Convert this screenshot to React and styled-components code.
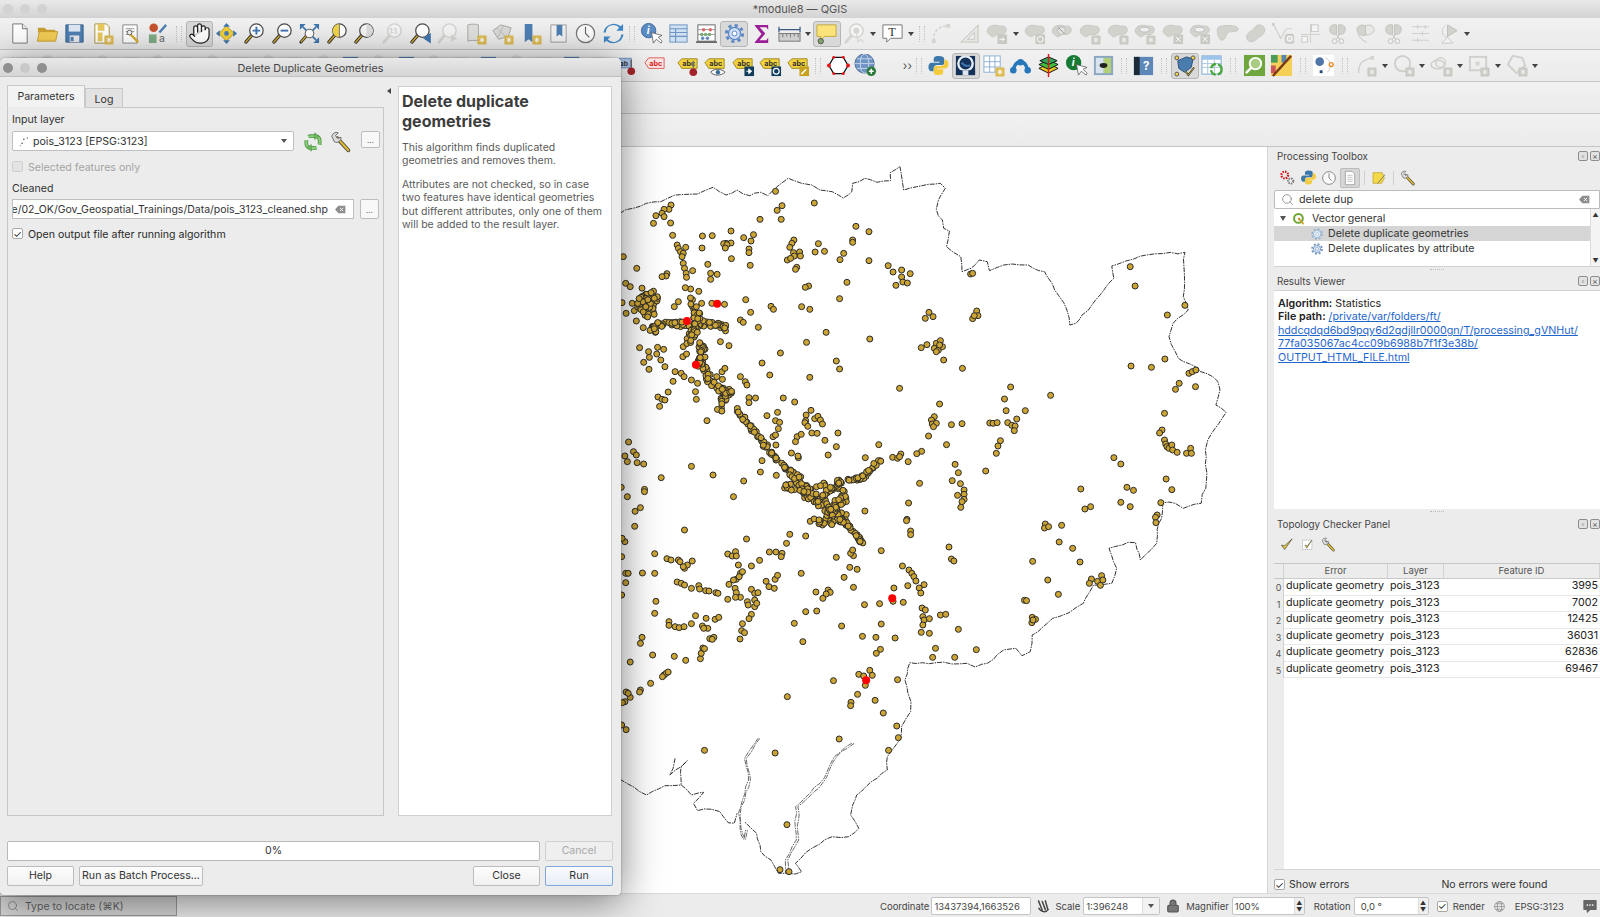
import React from 'react';
import styled, { createGlobalStyle, css } from 'styled-components';
import { Hand, Search, Lock } from 'lucide-react';

const font = `Inter, "Liberation Sans", sans-serif`;

const Global = createGlobalStyle`
  html, body { margin: 0; padding: 0; background: #ececec; }
  * { box-sizing: border-box; }
`;

const Page = styled.div`
  position: relative;
  width: 1600px;
  height: 917px;
  overflow: hidden;
  display: flex;
  flex-direction: column;
  font-family: ${font};
  font-size: 10.6px;
  color: #2a2a2a;
  background: #ececec;
`;

const TitleBar = styled.div`
  height: 18px;
  flex: none;
  position: relative;
  display: flex;
  align-items: center;
  justify-content: center;
  background: linear-gradient(#e9e9e9, #d3d3d3);
  font-size: 11px;
  color: #555;
`;

const Lights = styled.div`
  position: absolute;
  left: 3px;
  top: ${p => p.$top}px;
  display: flex;
  gap: 7px;
`;

const Light = styled.span`
  width: 10px;
  height: 10px;
  border-radius: 50%;
  background: ${p => p.$c};
`;

const ToolRow = styled.div`
  height: ${p => p.$h || 32}px;
  flex: none;
  display: flex;
  align-items: center;
  padding-left: ${p => p.$pad || 0}px;
  background: linear-gradient(#f1f1f1, #ebebeb);
  border-bottom: 1px solid #c6c6c6;
`;

const Tool = styled.div`
  width: 27.6px;
  height: 26px;
  flex: none;
  display: flex;
  align-items: center;
  justify-content: center;
  border-radius: 3px;
  border: 1px solid transparent;
  ${p => p.$on && css`
    background: #d9d9d9;
    border-color: #b6b6b6;
  `}
`;

const Grip = styled.div`
  width: ${p => p.$w}px;
  flex: none;
  display: flex;
  justify-content: center;
  &::after {
    content: '';
    width: 4px;
    height: 16px;
    border-left: 1px dotted #c2c2c2;
    border-right: 1px dotted #c2c2c2;
  }
`;

const Gap = styled.div`
  width: ${p => p.$w}px;
  flex: none;
`;

const VSpace = styled.div`
  height: ${p => p.$h}px;
  flex: none;
`;

const Caret = styled.div`
  width: 10px;
  flex: none;
  display: flex;
  justify-content: center;
  &::after {
    content: '';
    border-left: 3.5px solid transparent;
    border-right: 3.5px solid transparent;
    border-top: 4px solid #444;
  }
`;

const Chevrons = styled.div`
  width: 14px;
  flex: none;
  color: #555;
  font-size: 12px;
  text-align: center;
`;

const Main = styled.div`
  flex: 1;
  min-height: 0;
  display: flex;
`;

const MapCanvas = styled.div`
  width: 1268px;
  flex: none;
  background: #fff;
  border-right: 1px solid #d4d4d4;
`;

const MapSvg = styled.svg`
  display: block;
  width: 1268px;
  height: 746px;
`;

const Dock = styled.div`
  flex: 1;
  min-width: 0;
  display: flex;
  flex-direction: column;
  padding-left: 6px;
  background: #ececec;
`;

const DockTitle = styled.div`
  height: ${p => p.$h}px;
  flex: none;
  display: flex;
  align-items: center;
  justify-content: space-between;
  padding: ${p => p.$top || 0}px 0 0 3px;
  font-size: 9.8px;
  color: #444;
`;

const DockButtons = styled.div`
  display: flex;
  gap: 2px;
`;

const DockButton = styled.span`
  width: 10px;
  height: 10px;
  border: 1px solid #8d8d8d;
  border-radius: 2px;
  font-size: 8px;
  line-height: 8px;
  text-align: center;
  color: #555;
  background: #e2e2e2;
`;

const DockTools = styled.div`
  height: ${p => p.$h}px;
  flex: none;
  display: flex;
  align-items: center;
  gap: ${p => p.$gap || 0}px;
  padding-left: ${p => p.$pad || 0}px;
`;

const SmallTool = styled.div`
  width: 20px;
  height: 20px;
  flex: none;
  display: flex;
  align-items: center;
  justify-content: center;
  border-radius: 2px;
  margin: ${p => p.$mt || 0}px 0 0 ${p => p.$ml || 0}px;
  ${p => p.$on && css`
    background: #d6d6d6;
    border: 1px solid #bdbdbd;
  `}
`;

const Divider = styled.div`
  width: 1px;
  height: 14px;
  flex: none;
  margin: 0 3px;
  background: #d0d0d0;
`;

const SearchBox = styled.div`
  height: 19px;
  flex: none;
  display: flex;
  align-items: center;
  gap: 5px;
  padding: 0 8px 0 6px;
  background: #fff;
  border: 1px solid #bcbcbc;
  border-radius: 2px 0 0 2px;
  font-size: 10.8px;
  color: #333;
`;

const SearchClear = styled.span`
  margin-left: auto;
  display: flex;
`;

const Tree = styled.div`
  height: 58px;
  flex: none;
  position: relative;
  background: #fff;
  border-bottom: 1px solid #d0d0d0;
  padding-top: 2px;
`;

const TreeRow = styled.div`
  height: 15px;
  display: flex;
  align-items: center;
  gap: ${p => (p.$top ? 6 : 4)}px;
  padding-left: ${p => p.$indent}px;
  margin-right: 10px;
  font-size: 10.6px;
  color: #333;
  background: ${p => (p.$sel ? '#d5d5d5' : 'transparent')};
`;

const Twist = styled.span`
  border-left: 3.5px solid transparent;
  border-right: 3.5px solid transparent;
  border-top: 5px solid #555;
`;

const ScrollTrack = styled.div`
  position: absolute;
  right: 0;
  top: 0;
  bottom: 0;
  width: 10px;
  background: #f4f4f4;
  border-left: 1px solid #dcdcdc;
  color: #333;
  font-size: 6px;
  line-height: 11px;
  display: flex;
  flex-direction: column;
  justify-content: space-between;
  align-items: center;
`;

const Splitter = styled.div`
  height: ${p => p.$h}px;
  flex: none;
  display: flex;
  align-items: center;
  justify-content: center;
  &::after {
    content: '';
    width: 14px;
    border-top: 1px dotted #bdbdbd;
  }
`;

const Results = styled.div`
  height: 219px;
  flex: none;
  background: #fff;
  padding: 6px 4px;
  font-size: 10.7px;
  line-height: 13.4px;
  color: #222;
  border-top: 1px solid #d2d2d2;
`;

const Strong = styled.b`
  font-weight: 600;
`;

const ResultLink = styled.span`
  display: ${p => (p.$inline ? 'inline' : 'block')};
  color: #1f66cc;
  text-decoration: underline;
`;

const Table = styled.div`
  height: 307px;
  flex: none;
  display: flex;
  flex-direction: column;
  background: #fff;
  border-top: 1px solid #c6c6c6;
  border-bottom: 1px solid #d4d4d4;
`;

const TableRow = styled.div`
  display: grid;
  grid-template-columns: 10px 104px 56px 1fr;
  height: ${p => (p.$head ? 15 : 16.5)}px;
  flex: none;
  border-bottom: 1px solid ${p => (p.$head ? '#c9c9c9' : '#e8e8e8')};
`;

const HeadCell = styled.div`
  background: #ececec;
  border-right: 1px solid #d2d2d2;
  font-size: 9.5px;
  line-height: 14px;
  text-align: center;
  color: #555;
`;

const RowIndex = styled.div`
  background: #ececec;
  border-right: 1px solid #cfcfcf;
  border-bottom: 1px solid #cfcfcf;
  font-size: 9px;
  line-height: 18px;
  color: #555;
  text-align: center;
`;

const Cell = styled.div`
  padding: 0 2px;
  font-size: 10.7px;
  line-height: 14px;
  color: #222;
  white-space: nowrap;
  text-align: ${p => (p.$num ? 'right' : 'left')};
`;

const TableFill = styled.div`
  flex: 1;
  border-left: 10px solid #ececec;
`;

const ErrorFooter = styled.div`
  flex: 1;
  display: flex;
  align-items: center;
  padding: 6px 0 0 0;
  font-size: 10.5px;
  color: #333;
`;

const Check = styled.span`
  width: 11px;
  height: 11px;
  flex: none;
  display: inline-flex;
  align-items: center;
  justify-content: center;
  background: ${p => (p.$off ? '#e4e4e4' : '#fff')};
  border: 1px solid ${p => (p.$off ? '#cfcfcf' : '#a8a8a8')};
  border-radius: 2px;
  font-size: 10px;
  line-height: 1;
  color: #222;
`;

const CheckLabel = styled.span`
  margin-left: ${p => p.$ml || 5}px;
  color: ${p => (p.$off ? '#a4a4a4' : 'inherit')};
`;

const FoundText = styled.span`
  margin-left: 92px;
`;

const StatusBar = styled.div`
  height: 24px;
  flex: none;
  display: flex;
  align-items: center;
  padding: 1px 0 0 880px;
  background: #ececec;
  border-top: 1px solid #dadada;
  font-size: 9.5px;
  color: #444;
`;

const Locator = styled.div`
  position: absolute;
  left: 0;
  bottom: 1px;
  width: 177px;
  height: 20px;
  display: flex;
  align-items: center;
  gap: 6px;
  padding-left: 6px;
  background: #d6d6d6;
  border: 1px solid #9a9a9a;
  font-size: 10.5px;
  color: #666;
`;

const StatusInput = styled.div`
  width: ${p => p.$w}px;
  height: 18px;
  flex: none;
  display: flex;
  align-items: center;
  justify-content: space-between;
  margin: 0 ${p => p.$mr || 0}px 0 ${p => p.$ml || 3}px;
  padding-left: ${p => (p.$pad ? 6 : 2)}px;
  background: #fff;
  border: 1px solid #c4c4c4;
  border-radius: 2px;
  white-space: nowrap;
`;

const Spin = styled.span`
  width: 10px;
  height: 100%;
  display: flex;
  flex-direction: column;
  align-items: center;
  justify-content: center;
  gap: 1px;
  background: #efefef;
  border-left: 1px solid #ddd;
  font-size: 6px;
  line-height: 6px;
  color: #333;
`;

const ComboEnd = styled.span`
  width: 17px;
  height: 100%;
  display: flex;
  align-items: center;
  justify-content: center;
  background: #f2f2f2;
  border-left: 1px solid #ddd;
  &::after {
    content: '';
    border-left: 3px solid transparent;
    border-right: 3px solid transparent;
    border-top: 4px solid #555;
  }
`;

const StatusSlot = styled.div`
  width: ${p => p.$w}px;
  flex: none;
  display: flex;
  align-items: center;
  justify-content: center;
`;

const StatusText = styled.span`
  white-space: nowrap;
`;

const Dialog = styled.div`
  position: absolute;
  left: 0;
  top: 58px;
  width: 621px;
  height: 837px;
  display: flex;
  flex-direction: column;
  background: #ececec;
  border-radius: 5px 5px 4px 4px;
  box-shadow: 0 6px 40px rgba(0, 0, 0, 0.5), 0 0 2px rgba(0, 0, 0, 0.4);
`;

const DialogTitle = styled.div`
  height: 19px;
  flex: none;
  position: relative;
  display: flex;
  align-items: center;
  justify-content: center;
  padding-top: 2px;
  background: linear-gradient(#e8e8e8, #d5d5d5);
  border-bottom: 1px solid #c0c0c0;
  border-radius: 5px 5px 0 0;
  font-size: 10.8px;
  color: #444;
`;

const DialogBody = styled.div`
  height: 739px;
  flex: none;
  display: flex;
  padding: 9px 9px 0 7px;
`;

const LeftPane = styled.div`
  width: 377px;
  flex: none;
  display: flex;
  flex-direction: column;
`;

const Tabs = styled.div`
  height: 22px;
  flex: none;
  display: flex;
  align-items: flex-end;
  position: relative;
  z-index: 1;
  margin-bottom: -1px;
`;

const Tab = styled.div`
  width: ${p => p.$w}px;
  height: ${p => (p.$active ? 23 : 20)}px;
  flex: none;
  text-align: center;
  line-height: ${p => (p.$active ? 22 : 21)}px;
  font-size: 10.6px;
  color: #333;
  background: ${p => (p.$active ? '#f3f3f3' : '#e2e2e2')};
  border: 1px solid #c8c8c8;
  border-bottom: ${p => (p.$active ? '1px solid #ececec' : '1px solid #c8c8c8')};
`;

const ParamPanel = styled.div`
  flex: 1;
  padding: 5px 4px;
  border: 1px solid #c6c6c6;
  background: #ececec;
`;

const FieldLabel = styled.div`
  height: 14px;
  line-height: 14px;
  margin-top: ${p => p.$mt || 0}px;
  color: #333;
`;

const FieldRow = styled.div`
  display: flex;
  align-items: flex-start;
  margin-top: ${p => p.$mt || 0}px;
`;

const Combo = styled.div`
  width: 282px;
  height: 20px;
  flex: none;
  display: flex;
  align-items: center;
  gap: 1px;
  padding: 0 6px 0 5px;
  background: #fff;
  border: 1px solid #bfbfbf;
  border-radius: 2px;
  color: #333;
`;

const ComboCaret = styled.span`
  margin-left: auto;
  border-left: 3px solid transparent;
  border-right: 3px solid transparent;
  border-top: 4px solid #555;
`;

const PathInput = styled.div`
  width: 342px;
  height: 20px;
  flex: none;
  display: flex;
  align-items: center;
  justify-content: flex-end;
  gap: 6px;
  padding: 0 6px 0 0;
  overflow: hidden;
  background: #fff;
  border: 1px solid #bfbfbf;
  font-size: 10.5px;
  color: #333;
  white-space: nowrap;
`;

const Ellipsis = styled.div`
  width: 19px;
  height: ${p => p.$h}px;
  flex: none;
  margin-left: ${p => p.$ml}px;
  background: #f8f8f8;
  border: 1px solid #bdbdbd;
  border-radius: 2px;
  color: #555;
  font-size: 8px;
  line-height: ${p => p.$h}px;
  text-align: center;
`;

const Collapser = styled.div`
  width: 14px;
  flex: none;
  padding: 2px 0 0 3px;
  &::after {
    content: '';
    display: block;
    width: 0;
    border-top: 3px solid transparent;
    border-bottom: 3px solid transparent;
    border-right: 4px solid #444;
  }
`;

const HelpPanel = styled.div`
  flex: 1;
  min-width: 0;
  padding: 4px 3px;
  background: #fff;
  border: 1px solid #d0d0d0;
  color: #5a5a5a;
  font-size: 10.5px;
  line-height: 13.4px;
`;

const HelpHeading = styled.h2`
  margin: 0 0 10px;
  font-size: 16px;
  line-height: 20px;
  font-weight: 700;
  color: #3c3c3c;
`;

const HelpText = styled.p`
  margin: 0 0 10px;
`;

const DialogFooter = styled.div`
  flex: 1;
  display: flex;
  flex-direction: column;
  gap: 5px;
  padding: 25px 9px 0 7px;
`;

const FooterRow = styled.div`
  display: flex;
  gap: 5px;
`;

const Progress = styled.div`
  width: 533px;
  height: 20px;
  flex: none;
  background: #fff;
  border: 1px solid #b8b8b8;
  border-radius: 2px;
  text-align: center;
  line-height: 18px;
  color: #333;
`;

const Button = styled.div`
  width: ${p => p.$w}px;
  height: 20px;
  flex: none;
  margin-left: ${p => p.$ml || 0}px;
  text-align: center;
  line-height: 18px;
  white-space: nowrap;
  color: ${p => (p.$off ? '#a8a8a8' : '#333')};
  background: ${p => (p.$primary ? 'linear-gradient(#fbfcff, #e6edf7)' : p.$off ? '#efefef' : 'linear-gradient(#fdfdfd, #f1f1f1)')};
  border: 1px solid ${p => (p.$primary ? '#7fa8dc' : p.$off ? '#d0d0d0' : '#bcbcbc')};
  border-radius: 2px;
`;

// --- icons ---

const Svg = styled.svg`
  width: ${p => p.$s || 24}px;
  height: ${p => p.$s || 24}px;
  display: block;
  flex: none;
`;

const Ic = ({ s, children }) => <Svg $s={s} viewBox="0 0 24 24" fill="none">{children}</Svg>;

const Badge = ({ c = '#dcb94e' }) => (
  <g>
    <rect x="14" y="14" width="9.5" height="9.5" rx="1" fill={c} />
    <path d="M18.7 15.8v6M16.2 17.2l5 3M21.2 17.2l-5 3" stroke="#fff" strokeWidth="1" />
  </g>
);

const Lens = ({ fill = '#fff', stroke = '#4d4d4d', handle = '#d3ab2b', children }) => (
  <g>
    <path d="M9 14L3 21" stroke="#333" strokeWidth="3.4" strokeLinecap="round" />
    <path d="M9 14L3 21" stroke={handle} strokeWidth="1.6" strokeLinecap="round" />
    <circle cx="14" cy="9" r="7" fill={fill} stroke={stroke} strokeWidth="1.3" />
    {children}
  </g>
);

const GreyLens = ({ children }) => (
  <g>
    <path d="M9 14L3 21" stroke="#d4d4d0" strokeWidth="3" strokeLinecap="round" />
    <circle cx="14" cy="9" r="7" fill="#f4f4f4" stroke="#d0d0cc" strokeWidth="1.4" />
    {children}
  </g>
);

const Blob = ({ d = 'M3 7c2-4 8-4 11-3s7-1 8 3-3 7-7 6-5 4-8 2-6-4-4-8z', children }) => (
  <g>
    <path d={d} fill="#d3d3ce" stroke="#c6c6c2" strokeWidth="1" />
    {children}
  </g>
);

const GreyBadge = () => (
  <g>
    <rect x="14" y="14" width="9.5" height="9.5" rx="1" fill="#c9c9c3" />
    <path d="M18.7 15.8v6M16.2 17.2l5 3M21.2 17.2l-5 3" stroke="#f2f2f2" strokeWidth="1" />
  </g>
);

const Tag = ({ fill = '#f2d13c', line = '#9c8a2b', color = '#333', children }) => (
  <g>
    <path d="M1 9l4-4h16v10H5z" fill={fill} stroke={line} strokeWidth="1" />
    <text x="5.5" y="12.8" fontSize="7.5" fontWeight="700" fontFamily={font} fill={color}>abc</text>
    {children}
  </g>
);

const Cog = ({ c = '#5b87c5', fill = '#cfe0f4' }) => (
  <g>
    <circle cx="12" cy="12" r="8.5" stroke={c} strokeWidth="3" strokeDasharray="3.3 3.37" />
    <circle cx="12" cy="12" r="6.3" fill={fill} stroke={c} strokeWidth="1.3" />
    <circle cx="12" cy="12" r="2.6" fill="#fff" stroke={c} strokeWidth="1" />
  </g>
);

const Python = () => (
  <g>
    <path d="M12 2c-4 0-5 1.500-5 3.500V8h6v1H5c-2.500 0-3.500 2-3.500 4.500S2.500 18 5 18h2v-3c0-2 1.500-3.500 3.500-3.500h5c1.500 0 2.500-1 2.500-2.500V5.500C18 3 16 2 12 2z" fill="#3d78ab" />
    <path d="M12 22c4 0 5-1.500 5-3.500V16h-6v-1h8c2.500 0 3.500-2 3.500-4.500S21.500 6 19 6h-1v3c0 2-1.500 3.500-3.500 3.500h-5C8 12.500 7 13.500 7 15v3.500C7 21 8 22 12 22z" fill="#f3cb3f" />
  </g>
);

const icons = {
  new: <><path d="M5 2h10l5 5v15H5z" fill="#fff" stroke="#777" /><path d="M15 2v5h5" fill="#eee" stroke="#777" /></>,
  open: <><path d="M2 6h7l2 2h9v3H2z" fill="#c9a030" /><path d="M1.500 20l2-10h19l-2 10z" fill="#f4cd55" stroke="#c9a030" /></>,
  save: <><path d="M3 3h18v18H3z" fill="#4e7fb3" stroke="#3a618c" /><rect x="6" y="3" width="12" height="7" fill="#dfe8f2" /><rect x="7" y="14" width="10" height="7" fill="#e8e8e8" /><rect x="8" y="15.500" width="3" height="4.500" fill="#4e7fb3" /></>,
  saveAs: <><path d="M4 2h12l3 3v17H4z" fill="#fff" stroke="#a8923c" /><path d="M7 2h7v7H7zM7 11h5v9H7z" fill="#e9c95b" /><Badge /></>,
  props: <><path d="M4 3h15v19H4z" fill="#fff" stroke="#888" /><path d="M7 7h9M7 10h9M7 13h5" stroke="#999" /><path d="M11 12l9 9" stroke="#d3ab2b" strokeWidth="2.500" /><circle cx="11" cy="11" r="2.500" fill="#eee" stroke="#666" /></>,
  style: <><circle cx="8" cy="6" r="4.500" fill="#c5532e" /><path d="M14 11L21 3" stroke="#4e7fb3" strokeWidth="2.500" /><rect x="3" y="13" width="8" height="9" fill="#7eab84" /><text x="13.500" y="21" fontSize="11" fontFamily={font} fill="#666">a</text></>,
  pan: <><path d="M12 4l8 8-8 8-8-8z" fill="#f1cf3b" stroke="#b99b22" /><circle cx="12" cy="12" r="2.500" fill="#4e7fb3" /><path d="M12 1l3.500 4h-7zM12 23l3.500-4h-7zM1 12l4-3.500v7zM23 12l-4-3.500v7z" fill="#3f76ae" /></>,
  zoomIn: <Lens><path d="M14 5v8M10 9h8" stroke="#3f76ae" strokeWidth="2" /></Lens>,
  zoomOut: <Lens><path d="M10 9h8" stroke="#3f76ae" strokeWidth="2" /></Lens>,
  zoomFull: <><path d="M2 2h6L2 8zM22 2h-6l6 6zM22 22h-6l6-6z" fill="#3f76ae" /><path d="M5 5l5 5M19 5l-5 5M19 19l-5-5" stroke="#3f76ae" strokeWidth="1.800" /><path d="M9 14L3 21" stroke="#333" strokeWidth="3.200" strokeLinecap="round" /><path d="M9 14L3 21" stroke="#d3ab2b" strokeWidth="1.500" /><circle cx="12" cy="12" r="4.500" fill="#fff" stroke="#555" /></>,
  zoomSel: <Lens><path d="M14 2a7 7 0 0 0 0 14z" fill="#f1d448" /><path d="M14 2v14" stroke="#777" /></Lens>,
  zoomLayer: <Lens fill="#f4f4f4"><path d="M14 2a7 7 0 0 1 0 14z" fill="#dcdcdc" /></Lens>,
  zoomOne: <GreyLens><text x="8.500" y="12" fontSize="7.500" fontFamily={font} fill="#c4c4c0">1:1</text></GreyLens>,
  zoomLast: <Lens><path d="M22 13l-6 4 6 4z" fill="#3f76ae" stroke="#3f76ae" strokeWidth="1.500" /></Lens>,
  zoomNext: <GreyLens><path d="M16 13l6 4-6 4z" fill="#d6d6d2" /></GreyLens>,
  mapNew: <><path d="M4 3c2-1 9-1 11 0v17c-2-1-9-1-11 0z" fill="#e0e0de" stroke="#a9a9a5" /><Badge /></>,
  mapTile: <><path d="M2 9l8-6 11 3-3 9-10 3z" fill="#dadad6" stroke="#a6a6a2" /><path d="M6 6l9 9M13 4l-6 12" stroke="#bbb" /><Badge /></>,
  bookNew: <><path d="M6 2h8v19l-4-3-4 3z" fill="#4e7fb3" /><Badge /></>,
  book: <><path d="M4 3h16v18H4z" fill="#f2f2f2" stroke="#9c9c9c" /><path d="M10 3h6v12l-3-2-3 2z" fill="#4e7fb3" /></>,
  clock: <><circle cx="12" cy="12" r="9.500" fill="#fbfbfb" stroke="#777" strokeWidth="1.300" /><path d="M12 5v7l4 4" stroke="#666" strokeWidth="1.200" /></>,
  refresh: <><path d="M4 11a8 8 0 0 1 14-5l-3 3h7V2l-2.500 2.500A11 11 0 0 0 1.500 11z" fill="#3f87c6" /><path d="M20 13a8 8 0 0 1-14 5l3-3H2v7l2.500-2.500A11 11 0 0 0 22.500 13z" fill="#3f87c6" /></>,
  identify: <><circle cx="9" cy="9" r="7.500" fill="#5b8cc4" stroke="#41699a" /><text x="7" y="13" fontSize="11" fontWeight="700" fontStyle="italic" fontFamily={font} fill="#fff">i</text><path d="M12 11l2 11 3-4 5 4 1-2-4-4 4-2z" fill="#fff" stroke="#555" strokeWidth=".8" /></>,
  attr: <><rect x="3" y="3" width="18" height="18" fill="#cfe0f2" stroke="#6e95bf" /><path d="M3 7h18M3 11h18M3 15h18M9 7v14" stroke="#6e95bf" strokeWidth="1.200" /></>,
  abacus: <><rect x="3" y="3" width="18" height="17" fill="#fff" stroke="#666" /><path d="M3 8h18M3 13h18" stroke="#999" /><circle cx="9" cy="8" r="1.800" fill="#d66" /><circle cx="16" cy="8" r="1.800" fill="#d66" /><circle cx="7" cy="13" r="1.800" fill="#7a7" /><circle cx="11" cy="13" r="1.800" fill="#7a7" /><circle cx="15" cy="13" r="1.800" fill="#7a7" /><circle cx="8" cy="17" r="1.800" fill="#68b" /><circle cx="13" cy="17" r="1.800" fill="#68b" /><path d="M1 21h22" stroke="#555" strokeWidth="1.500" /></>,
  gear: <Cog />,
  sigma: <path d="M5 3h14v5l-2-2.500H10l6 6.500-6 7h7l2-2.500V22H5v-1l7-8.500L5 4z" fill="#9b1e99" />,
  ruler: <><path d="M1 8h22M1 5v6M23 5v6" stroke="#3b5b82" strokeWidth="1.300" /><rect x="1" y="12" width="22" height="8" fill="#cfcfcf" stroke="#777" /><path d="M5 12v4M9 12v3M13 12v4M17 12v3M21 12v4" stroke="#777" /></>,
  balloon: <><path d="M2 3h20v12H10l-4 4v-4H2z" fill="#fbe27a" stroke="#c2a73a" /><circle cx="6" cy="20" r="2.800" fill="#7ea46a" stroke="#555" /></>,
  mapTip: <GreyLens><circle cx="14" cy="9" r="3" fill="#d5d5d1" /><path d="M14 12l2 9 2-3 4 3" stroke="#cfcfcb" /></GreyLens>,
  text: <><path d="M2 3h20v14H10l-4 4v-4H2z" fill="#fff" stroke="#777" /><text x="7.500" y="14.500" fontSize="13" fontFamily='"Liberation Serif", serif' fill="#333">T</text></>,
  digitize: <><path d="M4 20C3 10 9 4 19 4" stroke="#cfcfcb" strokeWidth="1.500" strokeDasharray="3 2" /><rect x="2" y="18" width="4" height="4" fill="#d4d4d0" /><rect x="17" y="2" width="4" height="4" fill="#d4d4d0" /></>,
  triangle: <><path d="M3 21L21 3v18z" fill="#e4e4e0" stroke="#c4c4c0" /><path d="M10 18l7-7v7z" fill="#f0f0f0" stroke="#c4c4c0" /></>,
  blobArrow: <Blob><rect x="13" y="13" width="10" height="10" fill="#c9c9c3" /><path d="M15 18h5M18 16l2 2-2 2" stroke="#fff" /></Blob>,
  blobRot: <Blob><rect x="13" y="13" width="10" height="10" fill="#c9c9c3" /><circle cx="18" cy="18" r="3" stroke="#fff" /></Blob>,
  blobCut: <Blob><circle cx="12" cy="9" r="4" fill="#e4e4e0" stroke="#bbb" /><path d="M9 6l6 6" stroke="#999" /></Blob>,
  blobStar: <Blob><GreyBadge /></Blob>,
  blobHole: <Blob><ellipse cx="12" cy="8" rx="5" ry="2.500" fill="#f0f0f0" stroke="#bbb" /><GreyBadge /></Blob>,
  blobX: <Blob><rect x="13" y="13" width="10" height="10" fill="#c9c9c3" /><path d="M15.500 15.500l5 5M20.500 15.500l-5 5" stroke="#fff" /></Blob>,
  blobHoleX: <Blob><ellipse cx="12" cy="8" rx="5" ry="2.500" fill="#f0f0f0" stroke="#bbb" /><rect x="13" y="13" width="10" height="10" fill="#c9c9c3" /><path d="M15.500 15.500l5 5M20.500 15.500l-5 5" stroke="#fff" /></Blob>,
  blobPlain: <Blob d="M2 6c3-3 15-3 19-1s2 5-2 5-7 0-8 3-2 6-5 6-6-9-4-13z" />,
  bean: <path d="M3 17c-1-4 2-6 5-8s4-6 8-6 7 4 5 8-5 4-8 7-9 4-10-1z" fill="#d3d3ce" stroke="#c6c6c2" />,
  vertex: <><path d="M3 3l7 14 6-10h6" stroke="#cfcfcb" strokeWidth="1.200" /><rect x="1" y="1" width="3" height="3" fill="#d0d0cc" /><rect x="15" y="13" width="9" height="9" rx="2" fill="#d8d8d4" stroke="#bbb" /><circle cx="19.500" cy="17.500" r="2.500" stroke="#fff" /></>,
  align: <><path d="M12 2v20M2 13h20" stroke="#cfcfcb" /><rect x="13" y="3" width="7" height="7" fill="#f4f4f4" stroke="#c8c8c4" /><rect x="3" y="15" width="6" height="6" fill="#f4f4f4" stroke="#c8c8c4" /></>,
  split: <><path d="M11 3c-5-1-8 2-7 6s4 4 7 4zM13 3c5-1 8 2 7 6s-4 4-7 4z" fill="#d3d3ce" stroke="#c2c2be" /><circle cx="9" cy="20" r="2.500" stroke="#c2c2be" /><circle cx="16" cy="20" r="2.500" stroke="#c2c2be" /><path d="M11 18l3-5M14 18l-3-5" stroke="#c2c2be" /></>,
  merge: <><path d="M3 8c0-4 5-6 9-4v10c-4 1-9-2-9-6z" fill="#d3d3ce" stroke="#c2c2be" /><path d="M12 4c4-2 9 0 9 4s-5 6-9 5z" fill="#e8e8e4" stroke="#c2c2be" /><path d="M4 12c2 5 6 8 9 9" stroke="#c2c2be" /></>,
  offset: <path d="M3 5h18M3 12h18M3 19h18M9 3v4M14 10v4M9 17v4M17 3v4" stroke="#cfcfcb" strokeWidth="1.200" />,
  reshape: <><path d="M11 3v12L21 9z" fill="#d3d3ce" stroke="#bdbdb9" /><path d="M9 3C4 7 4 15 11 16" stroke="#bdbdb9" strokeDasharray="2 1" /><path d="M5 22l6-6 6 6z" stroke="#c8c8c4" fill="#f2f2f2" /></>,
  abPin: <><path d="M1 8l4-3.500h12v10H5z" fill="#a8c2e2" stroke="#6e8fb8" /><text x="5" y="12" fontSize="7" fontWeight="700" fontFamily={font} fill="#333">ab</text><path d="M17 6v8" stroke="#666" strokeWidth="1.500" /><circle cx="17" cy="18" r="4" fill="#a4232b" /></>,
  abcRed: <><path d="M2 9l4-5h16v11H6z" fill="#fde8e8" stroke="#e25b5b" /><text x="6.500" y="12.500" fontSize="7.500" fontWeight="700" fontFamily={font} fill="#d22">abc</text></>,
  labelPin: <Tag><path d="M17 7v8" stroke="#777" strokeWidth="1.500" /><circle cx="17" cy="19" r="4" fill="#a4232b" /></Tag>,
  labelEye: <Tag><path d="M7 19c3-4 11-4 15 0-4 4-12 4-15 0z" fill="#fff" stroke="#555" /><circle cx="14.500" cy="19" r="2.300" fill="#3c6a9a" /></Tag>,
  labelMove: <Tag><rect x="13" y="13" width="10" height="10" fill="#123e5e" /><path d="M15 18h4M17.500 15.500L20.500 18l-3 2.500z" fill="#fff" stroke="#fff" /></Tag>,
  labelRot: <Tag><rect x="13" y="13" width="10" height="10" fill="#123e5e" /><circle cx="18" cy="18" r="3" stroke="#fff" strokeWidth="1.300" /></Tag>,
  labelEdit: <Tag><rect x="13" y="13" width="10" height="10" fill="#c8a21c" /><path d="M15 21l5-5" stroke="#fff" strokeWidth="1.500" /></Tag>,
  hexagon: <><path d="M7 3.500h10L22 12l-5 8.500H7L2 12z" stroke="#111" strokeWidth="1.300" fill="#fff" /><circle cx="7" cy="3.500" r="1.500" fill="#e11" /><circle cx="17" cy="3.500" r="1.500" fill="#e11" /><circle cx="22" cy="12" r="2" fill="#e11" /><circle cx="2" cy="12" r="2" fill="#e11" /><circle cx="7" cy="20.500" r="1.500" fill="#e11" /><circle cx="17" cy="20.500" r="1.500" fill="#e11" /></>,
  globe: <><circle cx="11" cy="10" r="10" fill="#6f94c4" stroke="#506f98" /><ellipse cx="11" cy="10" rx="4.500" ry="10" stroke="#c6d6ea" /><path d="M1 10h20M3 5h16M3 15h16" stroke="#c6d6ea" /><circle cx="18" cy="18" r="5" fill="#2d7a3e" /><path d="M15.500 18h5M18 15.500v5" stroke="#fff" strokeWidth="1.500" /></>,
  python: <Python />,
  plugin: <><rect x="2" y="2" width="20" height="20" fill="#14315a" /><circle cx="12" cy="10" r="7.500" fill="none" stroke="#e6ecf3" strokeWidth="2.500" /><path d="M8 9c2 3 5 4 9 3" stroke="#3f76ae" strokeWidth="2" /><path d="M2 17h20v5H2z" fill="#14315a" /><rect x="9" y="17" width="6" height="5" fill="#dfe6ee" /></>,
  grid: <><rect x="2" y="2" width="17" height="17" fill="#fff" stroke="#8fb0d6" /><path d="M2 8h17M2 13.500h17M8 2v17M13.500 2v17" stroke="#8fb0d6" /><Badge /></>,
  nodes: <><path d="M4.500 16.500C6 11 8 8 12 8s6 3 7.500 8.500" stroke="#2678bb" strokeWidth="3.600" /><circle cx="4.500" cy="17" r="3.400" fill="#2678bb" /><circle cx="12" cy="8.500" r="3.400" fill="#2678bb" /><circle cx="19.500" cy="17" r="3.400" fill="#2678bb" /></>,
  layers: <><path d="M2 15l10-5 10 5-10 5z" fill="#e7c628" stroke="#111" /><path d="M2 11l10-5 10 5-10 5z" fill="#3fbf3a" stroke="#111" /><path d="M3 7l9-4 9 4-9 4z" fill="#2ea65a" stroke="#111" /><path d="M12 0v24" stroke="#e11" strokeWidth="1.500" /></>,
  info: <><circle cx="9" cy="9" r="8" fill="#167a35" /><text x="7" y="13" fontSize="11" fontWeight="700" fontStyle="italic" fontFamily={font} fill="#fff">i</text><path d="M12 11l2 11 3-4 5 4 1-2-4-4 4-2z" fill="#fff" stroke="#555" strokeWidth=".8" /></>,
  swipe: <><rect x="2" y="2" width="20" height="20" fill="#8aa6c0" /><rect x="12" y="4" width="8" height="16" fill="#b3cf7a" /><rect x="4" y="4" width="8" height="16" fill="#d9e4ee" /><ellipse cx="12" cy="12" rx="4" ry="2.500" fill="#222" /></>,
  help: <><rect x="2" y="3" width="20" height="19" fill="#5c87b8" /><rect x="2" y="3" width="6" height="19" fill="#1d2a38" /><text x="11.500" y="17" fontSize="12" fontWeight="700" fontFamily={font} fill="#fff">?</text></>,
  topo: <><path d="M5 7l9-4 7 2-2 9-7 5-6-4z" fill="#4a7cae" stroke="#2e5379" /><circle cx="4" cy="4" r="2" fill="#f1d448" stroke="#555" /><circle cx="21" cy="4" r="2" fill="#f1d448" stroke="#555" /><circle cx="4" cy="21" r="2" fill="#f1d448" stroke="#555" /><path d="M13 18l3 4 6-8" stroke="#222" strokeWidth="1.800" /><path d="M13 18l3 4 6-8" stroke="#e8cc3a" strokeWidth=".8" /></>,
  tableSync: <><rect x="1" y="2" width="20" height="19" fill="#fff" stroke="#7ba7d3" /><rect x="1" y="2" width="20" height="4" fill="#9cc3e8" /><path d="M1 10h20M1 14h20M7 6v15M14 6v15" stroke="#a9c3dd" /><circle cx="16" cy="16" r="5.500" stroke="#4aa83a" strokeWidth="2.500" strokeDasharray="7 2" /></>,
  searchGreen: <><rect x="1" y="1" width="22" height="22" fill="#6fa63e" /><circle cx="13" cy="10" r="6" fill="#a8cc82" stroke="#fff" strokeWidth="2" /><path d="M9 14l-6 6" stroke="#fff" strokeWidth="2.500" /></>,
  paint: <><rect x="1" y="1" width="22" height="22" fill="#f5cf58" /><path d="M1 1h7v8H1z" fill="#4a9b57" /><path d="M1 12h5v8H1z" fill="#c55" /><path d="M12 1h5v8h-5z" fill="#58a" /><path d="M3 23L22 2" stroke="#7a3a15" strokeWidth="2.500" /></>,
  scatter: <><rect x="1" y="1" width="22" height="22" fill="#fff" /><circle cx="8" cy="8" r="4.500" fill="#4f76a6" /><path d="M14 4c5 2 8 9 2 15" stroke="#ccc" /><circle cx="20" cy="11" r="2" fill="#fff" stroke="#e68a2e" strokeWidth="1.500" /><rect x="8" y="17" width="3" height="3" fill="#2a4a75" /></>,
  digLine: <><path d="M5 20C4 10 9 6 19 4" stroke="#cfcfcb" strokeWidth="1.500" /><rect x="17" y="2" width="4" height="4" fill="#d4d4d0" /><GreyBadge /></>,
  digCircle: <><circle cx="11" cy="10" r="8" stroke="#cfcfcb" strokeWidth="2" /><GreyBadge /></>,
  digEllipse: <><ellipse cx="8" cy="11" rx="7" ry="4.500" stroke="#cfcfcb" strokeWidth="1.500" /><circle cx="11" cy="9" r="5" stroke="#cfcfcb" strokeWidth="1.500" /><GreyBadge /></>,
  digRect: <><rect x="3" y="3" width="17" height="14" stroke="#cfcfcb" strokeWidth="2" /><rect x="9" y="8" width="4" height="4" fill="#d4d4d0" /><GreyBadge /></>,
  digPoly: <><path d="M8 2l10 2 3 8-9 8-9-9z" stroke="#cfcfcb" strokeWidth="2" /><GreyBadge /></>,
  faintA: <><rect x="4" y="3" width="16" height="18" fill="#e3e3e0" /><GreyBadge /></>,
  faintB: <><circle cx="12" cy="8" r="7" fill="#dedede" /></>,
  faintC: <><rect x="4" y="3" width="16" height="9" fill="#5c87b8" /></>,
  checkGold: <path d="M4 13l5 7L21 3 9 14z" fill="#e8cc3a" stroke="#333" strokeWidth="1" />,
  checkBox: <><rect x="4" y="5" width="15" height="15" fill="#fff" stroke="#999" strokeDasharray="2 1" /><path d="M8 13l3 5 8-13-7 9z" fill="#e8cc3a" stroke="#444" strokeWidth=".8" /></>,
  wrench: <><path d="M8 8l12 13" stroke="#444" strokeWidth="4.200" strokeLinecap="round" /><path d="M8 8l12 13" stroke="#e0b92e" strokeWidth="2.400" strokeLinecap="round" /><path d="M2 6a5 5 0 0 1 7-4L6 5l2 3 4-1a5 5 0 0 1-7 5z" fill="#dcdcdc" stroke="#555" strokeWidth=".9" /></>,
  syncGreen: <><rect x="4" y="5" width="16" height="14" rx="5" stroke="#4d9443" strokeWidth="4.500" strokeDasharray="19 5 19 5" /><rect x="4" y="5" width="16" height="14" rx="5" stroke="#8ccf7a" strokeWidth="2.500" strokeDasharray="19 5 19 5" /><path d="M14 1l5 4-5 4zM10 15l-5 4 5 4z" fill="#6fb85f" stroke="#4d9443" strokeWidth=".7" /></>,
  gears: <><circle cx="9" cy="8" r="4.500" stroke="#d21616" strokeWidth="3" strokeDasharray="2 1.500" /><circle cx="17" cy="16" r="3.500" stroke="#777" strokeWidth="2.500" strokeDasharray="2 1.300" /></>,
  doc: <><path d="M5 2h10l4 4v16H5z" fill="#fff" stroke="#888" /><path d="M8 8h8M8 11h8M8 14h8M8 17h8" stroke="#aaa" /></>,
  note: <><path d="M3 4h14l3 8-4 8H3z" fill="#f3d949" stroke="#b99b22" /><path d="M10 20L21 7" stroke="#777" strokeWidth="1.400" /></>,
  qgis: <><circle cx="11" cy="11" r="7.500" stroke="#6da636" strokeWidth="3.500" /><path d="M13 13l7 8" stroke="#caa32a" strokeWidth="3" /><circle cx="12" cy="12" r="2" fill="#d08a2a" /></>,
  gearSoft: <Cog c="#6c8fc0" fill="#d8e4f2" />,
  gearPale: <Cog c="#8fb0d0" fill="#e6eef6" />,
  points: <><circle cx="7" cy="16" r="1.400" fill="#555" /><circle cx="10" cy="9" r="1.400" fill="#555" /><circle cx="16" cy="7" r="1.400" fill="#888" /><circle cx="4" cy="20" r="1" fill="#888" /></>,
  cmd: <><path d="M4 3l6 15M10 4l5 13M15 3l4 14" stroke="#444" strokeWidth="2.400" strokeLinecap="round" /><path d="M4 14c4 7 12 9 16 2" stroke="#444" strokeWidth="2.200" /></>,
  message: <><path d="M3 4h18v13h-9l-4 4v-4H3z" fill="#666" strokeLinejoin="round" stroke="#666" strokeWidth="2" /><circle cx="8" cy="10.500" r="1.300" fill="#fff" /><circle cx="12" cy="10.500" r="1.300" fill="#fff" /><circle cx="16" cy="10.500" r="1.300" fill="#fff" /></>,
  crs: <><circle cx="12" cy="12" r="9" fill="#eee" stroke="#666" /><ellipse cx="12" cy="12" rx="4" ry="9" stroke="#666" /><path d="M3 12h18M5 7h14M5 17h14" stroke="#666" /></>,
  clear: <><path d="M8 5h13v14H8l-6-7z" fill="#8d8d8d" /><path d="M11 9l6 6M17 9l-6 6" stroke="#fff" strokeWidth="1.600" /></>,
};

const T = ({ i, on, s = 23 }) => (
  <Tool $on={on}>
    {i === 'hand' ? <Hand size={23} strokeWidth={1.3} color="#222" fill="#fff" /> : <Ic s={s}>{icons[i]}</Ic>}
  </Tool>
);

// --- map data, written in the coordinates of the two map crops ---

const topPts = [
  [125,165],[120,178],[108,178],[103,190],[88,197],[108,200],[82,220],[124,219],[129,256],[381,124],[476,159],[397,167],[385,181],[343,208],[395,208],[578,229],[610,245],[272,243],[202,258],[226,257],[327,254],[303,263],[321,273],[260,280],[272,279],[254,281],[262,284],[258,294],[201,294],[140,285],[143,295],[148,305],[155,310],[152,320],[161,292],[316,297],[316,308],[426,270],[421,280],[416,292],[486,281],[478,306],[501,304],[570,270],[570,277],[548,310],[539,329],[610,332],[425,308],[440,306],[442,318],[427,318],[410,330],[418,325],[273,326],[8,320],[215,343],[319,346],[41,355],[155,340],[158,355],[162,370],[163,382],[178,362],[433,352],[430,358],[657,347],[669,366],[690,360],[711,371],[690,381],[693,396],[704,399],[676,406],[115,371],[113,378],[103,380],[222,370],[238,373],[222,388],[556,397],[462,408],[454,412],[173,417],[160,413],[193,424],[538,446],[308,449],[859,372],[864,370],[1250,350],[1262,408],[1384,466],[1341,495],
  [445,470],[465,478],[370,469],[376,478],[320,487],[295,510],[302,517],[339,532],[505,547],[457,577],[612,567],[246,575],[267,587],[393,609],[348,639],[530,633],[538,657],[367,675],[465,682],[295,680],[307,695],[311,705],[685,715],[316,743],[332,744],[316,758],[400,744],[428,756],[118,726],[93,741],[103,748],[110,750],[97,769],[213,812],[783,762],[360,797],[386,787],[381,812],[391,817],[388,836],[434,860],[430,875],[444,853],[468,781],[456,795],[455,812],[453,818],[460,829],[477,806],[485,799],[491,810],[496,822],[470,849],[483,850],[534,849],[502,871],[530,890],[510,915],[634,884],[601,923],[437,923],[420,909],[382,885],[348,932],[344,966],[383,976],[303,993],[278,1040],[228,975],[175,949],[101,983],[60,1018],[60,1025],[18,1040],[50,1073],[37,1084],[707,1059],[703,1108],[734,1000],[896,963],[821,943],[829,968],[814,992],[834,1001],[843,1020],[843,1033],[827,1036],[843,1048],[838,1055],[835,1072],[600,1083],
  [748,505],[757,487],[767,500],[874,483],[877,497],[864,506],[868,497],[738,593],[752,584],[793,630],[839,655],[957,711],[942,747],[946,782],[993,782],[1055,736],[812,824],[838,821],[906,819],[914,820],[924,818],[950,818],[972,807],[960,826],[968,828],[966,842],[932,872],[926,888],[922,910],[800,884],[756,858],[770,800],[763,810],[765,822],[775,820],[768,830],[739,904],[727,911],[706,935],[668,922],[680,925],[688,912],[685,920],[1252,648],[1302,652],[1335,627],[1370,700],[1361,718],[1410,710],[1394,670],[1402,665],[1411,660],[1334,790],[1328,840],[1322,849],[1334,870],[1337,882],[1340,890],[1345,895],[1352,885],[1354,900],[1365,907],[1388,910],[1398,895],[1400,910],[1210,923],[1227,942],[1338,987],[1352,1019],[1242,1012],[1258,1021],[1129,1017],[1227,1057],[1250,1070],[1153,1070],[1139,1077],[1325,1058],[1316,1095],[1312,1102],
  [21,876],[12,918],[33,905],[40,915],[42,938],[18,935],[58,942],[3,1012],[14,400],[25,410],[5,458],[30,460],[15,490],[35,482],[40,513],[57,533],[133,470],[143,455],[200,460],[256,463],[225,460],[70,605],[92,592],[107,598],[90,612],[100,630],[110,650],[71,658],[58,637],[72,622],[48,593],[154,620],[163,612],[155,590],[135,665],[150,670],[157,680],[130,694],[175,690],[190,700],[185,725],[187,748],[250,665],[257,655],[237,680],[251,688],
  [775,580],[785,572],[770,595],[780,600],[790,590],[775,605],[783,585],[375,860],[381,855],[352,880],[436,918],
];

const lowPts = [
  [36,19],[158,30],[310,57],[416,43],[455,48],[408,70],[397,100],[395,110],[366,96],[382,96],[342,121],[530,112],[640,92],[806,81],[812,117],[818,123],[712,33],[712,44],[702,2],[1042,12],[1040,24],[1050,20],[1082,16],[1313,8],[1076,66],[1109,85],[1127,126],[1011,124],[1048,180],[1074,223],[991,241],[996,242],[1010,292],[1018,298],[1009,308],[1012,300],[1155,177],[1150,190],[1170,184],[1180,167],[1183,180],[1177,196],[85,101],[115,116],[125,120],[143,120],[147,125],[158,145],[165,135],[177,123],[155,140],[264,102],[275,108],[283,95],[285,108],[322,138],[290,135],[295,160],[300,155],[285,178],[278,180],[292,170],[267,193],[282,205],[285,218],[295,232],[283,232],[264,238],[322,208],[330,220],[338,218],[330,240],[312,245],[314,255],[330,260],[335,250],[358,184],[365,200],[378,205],[380,178],[386,166],[444,160],[549,172],[563,142],[581,148],[572,107],[565,100],[570,90],[572,202],[480,216],[510,210],[515,217],[505,222],[497,235],[599,254],[636,251],[671,204],[694,247],[669,244],[692,138],[708,150],[715,160],[720,170],[725,183],[745,194],[705,197],[733,204],[737,219],[740,264],[748,270],[742,290],[745,300],[742,315],[758,296],[785,285],[798,283],[738,337],[758,340],[829,328],[55,159],[85,160],[88,244],[85,280],[185,287],[211,295],[233,298],[242,292],[120,305],[120,316],[135,320],[145,323],[157,320],[175,311],[202,318],[215,325],[205,325],[322,283],[316,296],[300,311],[298,332],[305,338],[294,357],[220,356],[230,352],[226,358],[54,352],[50,370],[80,405],[25,426],[133,409],[161,421],[197,416],[199,400],[203,384],[207,386],[455,275],[482,273],[427,310],[543,318],[640,312],[594,349],[627,352],[674,354],[448,365],[638,388],[628,400],[766,412],[773,385],[820,412],[873,389],[108,465],[113,460],[118,456],[104,470],[75,490],[50,510],[48,516],[25,532],[15,516],[20,520],[12,545],[6,548],[4,615],[15,629],[612,451],[585,463],[597,468],[618,466],[601,496],[523,482],[680,479],[582,523],[625,541],[566,547],[565,557],[645,579],[410,530],[678,618],[682,653],[658,691],[537,657],[207,691],[380,699],[409,914],[392,1049],[414,1055],[140,186],[150,190],[158,195],[175,205],[193,197],[195,207],[210,212],[218,213],[235,218],[240,220],[14,160],[20,160],[14,188],[4,110],[12,65],[5,55],[4,225],[496,15],[466,4],[506,3],
];

// dense strings of points: [line, how many, spread]
const dense = [
  [[[72,425],[62,490]], 44, 22],
  [[[40,455],[90,460]], 16, 14],
  [[[80,545],[85,528],[120,520],[160,525],[200,520],[240,525],[262,540]], 80, 8],
  [[[175,445],[185,480],[190,520],[175,555],[172,575]], 44, 9],
  [[[195,575],[205,610],[195,640],[210,660],[220,695],[245,715],[270,725],[250,745],[245,790]], 84, 8],
  [[[285,775],[310,820],[340,860],[370,910],[400,950],[430,975]], 60, 5],
  [[[420,970],[470,1040],[510,1075],[550,1110]], 90, 12],
  [[[405,1005],[470,1020],[540,1000]], 36, 14],
  [[[640,930],[610,960],[590,985],[540,995],[510,1020],[480,1060]], 50, 6],
  [[[555,1030],[530,1070],[510,1100]], 42, 11],
];
const denseLow = [
  [[[540,0],[565,22],[595,70]], 34, 4],
  [[[470,0],[510,8],[540,4]], 14, 8],
];

const z9 = ([x, y]) => [620 + x / 2.45, 150 + y / 3];
const z10 = ([x, y]) => [620 + x / 2.45, 520 + y / 3];

const seeded = seed => () => {
  seed = (seed * 16807) % 2147483647;
  return seed / 2147483647;
};

const along = (line, count, spread, rnd) => {
  const out = [];
  for (let n = 0; n < count; n++) {
    const t = rnd() * (line.length - 1);
    const k = Math.min(Math.floor(t), line.length - 2);
    const f = t - k;
    out.push([
      line[k][0] + (line[k + 1][0] - line[k][0]) * f + (rnd() - 0.5) * spread * 2,
      line[k][1] + (line[k + 1][1] - line[k][1]) * f + (rnd() - 0.5) * spread * 2,
    ]);
  }
  return out;
};

const rnd = seeded(4711);
const allPoints = [
  ...topPts.map(z9),
  ...lowPts.map(z10),
  ...dense.flatMap(([l, c, s]) => along(l, c, s, rnd)).map(z9),
  ...denseLow.flatMap(([l, c, s]) => along(l, c, s, rnd)).map(z10),
];

const redPoints = [...[[238,461],[164,513],[186,644]].map(z9), ...[[667,235],[603,481]].map(z10)];

// the outline is wobbly in the picture, so every segment gets a few shaken midpoints
const wobble = seeded(99);
const toPath = pts => pts.map(([x, y], n) => {
  if (!n) return `M${x.toFixed(1)} ${y.toFixed(1)}`;
  const [px, py] = pts[n - 1];
  const steps = Math.max(1, Math.round(Math.hypot(x - px, y - py) / 7));
  let d = '';
  for (let k = 1; k < steps; k++) {
    const mx = px + ((x - px) * k) / steps + (wobble() - 0.5) * 2.2;
    const my = py + ((y - py) * k) / steps + (wobble() - 0.5) * 2.2;
    d += `L${mx.toFixed(1)} ${my.toFixed(1)}`;
  }
  return `${d}L${x.toFixed(1)} ${y.toFixed(1)}`;
}).join('');

const borderEast = [
  ...[[0,190],[65,160],[100,155],[135,135],[190,132],[228,112],[260,135],[287,120],[318,137],[345,127],[362,137],[385,110],[412,85],[445,100],[470,105],[490,120],[520,125],[547,144],[568,125],[570,100],[600,85],[630,97],[663,92],[662,68],[686,50],[695,120],[740,107],[785,100],[797,115],[780,150],[775,178],[790,210],[793,235],[807,243],[800,290],[835,320],[838,365],[860,355],[880,330],[900,335],[905,362],[940,345],[1000,345],[1040,365],[1065,420],[1095,480],[1102,525],[1125,510],[1165,450],[1210,385],[1205,348],[1290,315],[1384,307],[1380,440],[1392,480],[1355,520],[1345,560],[1368,625],[1410,650],[1465,695],[1470,720],[1460,765],[1485,787],[1440,870],[1434,900],[1437,990],[1424,1060],[1380,1075],[1360,1060],[1330,1058],[1327,1105]].map(z9),
  ...[[1320,10],[1315,70],[1275,120],[1263,68],[1245,67],[1198,85],[1217,145],[1205,190],[1160,195],[1135,250],[1100,278],[1060,295],[1010,345],[1005,395],[985,407],[970,385],[940,390],[900,430],[870,441],[850,430],[775,428],[710,428],[698,480],[713,545],[712,575],[690,620],[688,655],[655,710],[655,750],[580,825],[570,855],[565,885],[585,925],[560,950],[520,950],[470,985],[430,1030],[445,1055],[430,1062],[405,1060],[388,1060],[370,1020],[345,995],[335,940],[305,905]].map(z10),
];
const borderWest = [[0,778],[65,825],[110,797],[150,795],[175,825],[205,817],[180,850],[190,872],[225,868],[245,875],[265,908],[280,910],[287,880]].map(z10);
const creek = [[135,715],[130,745],[122,765],[150,740],[165,722],[150,740],[150,795]].map(z10);
const inletA = [[338,655],[305,715],[315,780],[290,880],[297,945],[303,958],[308,930]].map(z10);
const riverA = [[568,670],[525,710],[490,790],[430,860],[432,960],[405,1020],[405,1060]].map(z10);
const shift = (pts, dx) => pts.map(([x, y]) => [x + dx, y]);

const Boundary = styled.path`
  fill: none;
  stroke: ${p => (p.$soft ? '#444' : '#1c1c1c')};
  stroke-width: ${p => (p.$soft ? 0.8 : 0.9)};
  stroke-dasharray: 5 1 1.500 1;
`;

const Feature = styled.circle`
  fill: #cda534;
  stroke: #2a2a2a;
  stroke-width: 1;
`;

const Selected = styled.circle`
  fill: #ff0000;
`;

const PoiMap = () => (
  <MapSvg viewBox="0 147 1268 746">
    <Boundary d={toPath(borderEast)} />
    <Boundary d={toPath(borderWest)} />
    <Boundary d={toPath(creek)} />
    <Boundary $soft d={toPath(inletA)} />
    <Boundary $soft d={toPath(shift(inletA, 1.800))} />
    <Boundary $soft d={toPath(riverA)} />
    <Boundary $soft d={toPath(shift(riverA, 2.400))} />
    {allPoints.map(([x, y], n) => <Feature key={n} cx={x} cy={y} r="3" />)}
    {redPoints.map(([x, y], n) => <Selected key={n} cx={x} cy={y} r="4" />)}
  </MapSvg>
);

const hiddenRow = ['faintA', 'faintB', 'faintA', 'faintB', 'faintA', 'faintB', 'faintA', 'faintB', 'faintA', 'faintB', 'faintA', 'faintB', 'faintC', 'faintB', 'faintC', 'faintB', 'faintA', 'faintC', 'faintB', 'faintA', 'faintC', 'faintA'];

const topoRows = [['0', '3995'], ['1', '7002'], ['2', '12425'], ['3', '36031'], ['4', '62836'], ['5', '69467']];

export default function App() {
  return (
    <Page>
      <Global />
      <TitleBar>
        <Lights $top={4}>
          <Light $c="#d2d2d2" /><Light $c="#d2d2d2" /><Light $c="#d2d2d2" />
        </Lights>
        *module8 — QGIS
      </TitleBar>

      <ToolRow $pad={6}>
        <T i="new" /><T i="open" /><T i="save" /><T i="saveAs" /><T i="props" /><T i="style" />
        <Grip $w={14} />
        <T i="hand" on /><T i="pan" /><T i="zoomIn" /><T i="zoomOut" /><T i="zoomFull" /><T i="zoomSel" /><T i="zoomLayer" /><T i="zoomOne" /><T i="zoomLast" /><T i="zoomNext" /><T i="mapNew" /><T i="mapTile" /><T i="bookNew" /><T i="book" /><T i="clock" /><T i="refresh" />
        <Grip $w={10.400} />
        <T i="identify" /><T i="attr" /><T i="abacus" /><T i="gear" on /><T i="sigma" /><T i="ruler" /><Caret /><T i="balloon" on /><T i="mapTip" /><Caret /><T i="text" /><Caret />
        <Grip $w={12} />
        <T i="digitize" /><T i="triangle" /><T i="blobArrow" /><Caret /><T i="blobRot" /><T i="blobCut" /><T i="blobStar" /><T i="blobStar" /><T i="blobHole" /><T i="blobX" /><T i="blobHoleX" /><T i="blobPlain" /><T i="bean" /><T i="vertex" /><T i="align" /><T i="split" /><T i="merge" /><T i="split" /><T i="offset" /><T i="reshape" /><Caret />
      </ToolRow>

      <ToolRow $pad={6}>
        {hiddenRow.map((name, n) => <T key={n} i={name} />)}
        <T i="abPin" /><T i="abcRed" />
        <Gap $w={6} />
        <T i="labelPin" /><T i="labelEye" /><T i="labelMove" /><T i="labelRot" /><T i="labelEdit" />
        <Grip $w={12} />
        <T i="hexagon" /><T i="globe" />
        <Gap $w={21} /><Chevrons>››</Chevrons>
        <Grip $w={10} />
        <T i="python" /><T i="plugin" on /><T i="grid" /><T i="nodes" /><T i="layers" /><T i="info" /><T i="swipe" />
        <Grip $w={12} />
        <T i="help" />
        <Grip $w={14} />
        <T i="topo" on /><T i="tableSync" />
        <Grip $w={14} />
        <T i="searchGreen" /><T i="paint" />
        <Grip $w={14} />
        <T i="scatter" />
        <Grip $w={15} />
        <T i="digLine" /><Caret /><T i="digCircle" /><Caret /><T i="digEllipse" /><Caret /><T i="digRect" /><Caret /><T i="digPoly" /><Caret />
      </ToolRow>

      <ToolRow />
      <ToolRow $h={33} />

      <Main>
        <MapCanvas><PoiMap /></MapCanvas>
        <Dock>
          <DockTitle $h={18}>
            Processing Toolbox
            <DockButtons><DockButton>▫</DockButton><DockButton>×</DockButton></DockButtons>
          </DockTitle>
          <DockTools $h={25} $pad={3} $gap={1}>
            <SmallTool><Ic s={18}>{icons.gears}</Ic></SmallTool>
            <SmallTool><Ic s={17}>{icons.python}</Ic></SmallTool>
            <SmallTool><Ic s={16}>{icons.clock}</Ic></SmallTool>
            <SmallTool $on><Ic s={16}>{icons.doc}</Ic></SmallTool>
            <Divider />
            <SmallTool><Ic s={16}>{icons.note}</Ic></SmallTool>
            <Divider />
            <SmallTool><Ic s={16}>{icons.wrench}</Ic></SmallTool>
          </DockTools>
          <SearchBox>
            <Search size={13} color="#888" strokeWidth={1.500} />
            delete dup
            <SearchClear><Ic s={13}>{icons.clear}</Ic></SearchClear>
          </SearchBox>
          <Tree>
            <TreeRow $indent={6} $top>
              <Twist /><Ic s={14}>{icons.qgis}</Ic>Vector general
            </TreeRow>
            <TreeRow $indent={36} $sel><Ic s={14}>{icons.gearPale}</Ic>Delete duplicate geometries</TreeRow>
            <TreeRow $indent={36}><Ic s={14}>{icons.gearSoft}</Ic>Delete duplicates by attribute</TreeRow>
            <ScrollTrack><span>▲</span><span>▼</span></ScrollTrack>
          </Tree>
          <Splitter $h={4} />
          <DockTitle $h={19} $top={1}>
            Results Viewer
            <DockButtons><DockButton>▫</DockButton><DockButton>×</DockButton></DockButtons>
          </DockTitle>
          <Results>
            <Strong>Algorithm:</Strong> Statistics<br />
            <Strong>File path:</Strong> <ResultLink $inline>/private/var/folders/ft/</ResultLink>
            <ResultLink>hddcqdqd6bd9pqy6d2qdjllr0000gn/T/processing_gVNHut/</ResultLink>
            <ResultLink>77fa035067ac4cc09b6988b7f1f3e38b/</ResultLink>
            <ResultLink>OUTPUT_HTML_FILE.html</ResultLink>
          </Results>
          <Splitter $h={4} />
          <DockTitle $h={20} $top={2}>
            Topology Checker Panel
            <DockButtons><DockButton>▫</DockButton><DockButton>×</DockButton></DockButtons>
          </DockTitle>
          <DockTools $h={23} $pad={2} $gap={1}>
            <SmallTool><Ic s={15}>{icons.checkGold}</Ic></SmallTool>
            <SmallTool><Ic s={15}>{icons.checkBox}</Ic></SmallTool>
            <SmallTool><Ic s={15}>{icons.wrench}</Ic></SmallTool>
          </DockTools>
          <VSpace $h={7} />
          <Table>
            <TableRow $head>
              <HeadCell /><HeadCell>Error</HeadCell><HeadCell>Layer</HeadCell><HeadCell>Feature ID</HeadCell>
            </TableRow>
            {topoRows.map(([idx, id]) => (
              <TableRow key={idx}>
                <RowIndex>{idx}</RowIndex>
                <Cell>duplicate geometry</Cell>
                <Cell>pois_3123</Cell>
                <Cell $num>{id}</Cell>
              </TableRow>
            ))}
            <TableFill />
          </Table>
          <ErrorFooter>
            <Check>✓</Check><CheckLabel $ml={4}>Show errors</CheckLabel>
            <FoundText>No errors were found</FoundText>
          </ErrorFooter>
        </Dock>
      </Main>

      <StatusBar>
        <StatusText>Coordinate</StatusText>
        <StatusInput $w={100} $ml={2}>13437394,1663526</StatusInput>
        <StatusSlot $w={24}><Ic s={15}>{icons.cmd}</Ic></StatusSlot>
        <StatusText>Scale</StatusText>
        <StatusInput $w={77}>1:396248<ComboEnd /></StatusInput>
        <StatusSlot $w={26}><Lock size={14} color="#555" fill="#777" /></StatusSlot>
        <StatusText>Magnifier</StatusText>
        <StatusInput $w={73} $mr={9}>100%<Spin><span>▲</span><span>▼</span></Spin></StatusInput>
        <StatusText>Rotation</StatusText>
        <StatusInput $w={75} $pad $mr={8}>0,0 °<Spin><span>▲</span><span>▼</span></Spin></StatusInput>
        <Check>✓</Check>
        <CheckLabel $ml={5}>Render</CheckLabel>
        <StatusSlot $w={30}><Ic s={13}>{icons.crs}</Ic></StatusSlot>
        <StatusText>EPSG:3123</StatusText>
        <StatusSlot $w={52}><Ic s={16}>{icons.message}</Ic></StatusSlot>
      </StatusBar>

      <Locator>
        <Search size={12} color="#777" strokeWidth={1.500} />
        Type to locate (⌘K)
      </Locator>

      <Dialog>
        <DialogTitle>
          <Lights $top={5}>
            <Light $c="#8f8f8f" /><Light $c="#c9c9c9" /><Light $c="#8f8f8f" />
          </Lights>
          Delete Duplicate Geometries
        </DialogTitle>
        <DialogBody>
          <LeftPane>
            <Tabs>
              <Tab $w={78} $active>Parameters</Tab>
              <Tab $w={38}>Log</Tab>
            </Tabs>
            <ParamPanel>
              <FieldLabel>Input layer</FieldLabel>
              <FieldRow $mt={4}>
                <Combo>
                  <Ic s={14}>{icons.points}</Ic>
                  pois_3123 [EPSG:3123]
                  <ComboCaret />
                </Combo>
                <SmallTool $ml={9} $mt={1}><Ic s={20}>{icons.syncGreen}</Ic></SmallTool>
                <SmallTool $ml={8} $mt={1}><Ic s={22}>{icons.wrench}</Ic></SmallTool>
                <Ellipsis $h={17} $ml={10}>…</Ellipsis>
              </FieldRow>
              <FieldRow $mt={9}>
                <Check $off />
                <CheckLabel $off>Selected features only</CheckLabel>
              </FieldRow>
              <FieldLabel $mt={8}>Cleaned</FieldLabel>
              <FieldRow $mt={3}>
                <PathInput>
                  e/02_OK/Gov_Geospatial_Trainings/Data/pois_3123_cleaned.shp
                  <Ic s={13}>{icons.clear}</Ic>
                </PathInput>
                <Ellipsis $h={20} $ml={6}>…</Ellipsis>
              </FieldRow>
              <FieldRow $mt={9}>
                <Check>✓</Check>
                <CheckLabel>Open output file after running algorithm</CheckLabel>
              </FieldRow>
            </ParamPanel>
          </LeftPane>
          <Collapser />
          <HelpPanel>
            <HelpHeading>Delete duplicate geometries</HelpHeading>
            <HelpText>This algorithm finds duplicated geometries and removes them.</HelpText>
            <HelpText>Attributes are not checked, so in case two features have identical geometries but different attributes, only one of them will be added to the result layer.</HelpText>
          </HelpPanel>
        </DialogBody>
        <DialogFooter>
          <FooterRow>
            <Progress>0%</Progress>
            <Button $w={68} $off>Cancel</Button>
          </FooterRow>
          <FooterRow>
            <Button $w={67}>Help</Button>
            <Button $w={124}>Run as Batch Process...</Button>
            <Button $w={67} $ml={265}>Close</Button>
            <Button $w={68} $primary>Run</Button>
          </FooterRow>
        </DialogFooter>
      </Dialog>
    </Page>
  );
}
